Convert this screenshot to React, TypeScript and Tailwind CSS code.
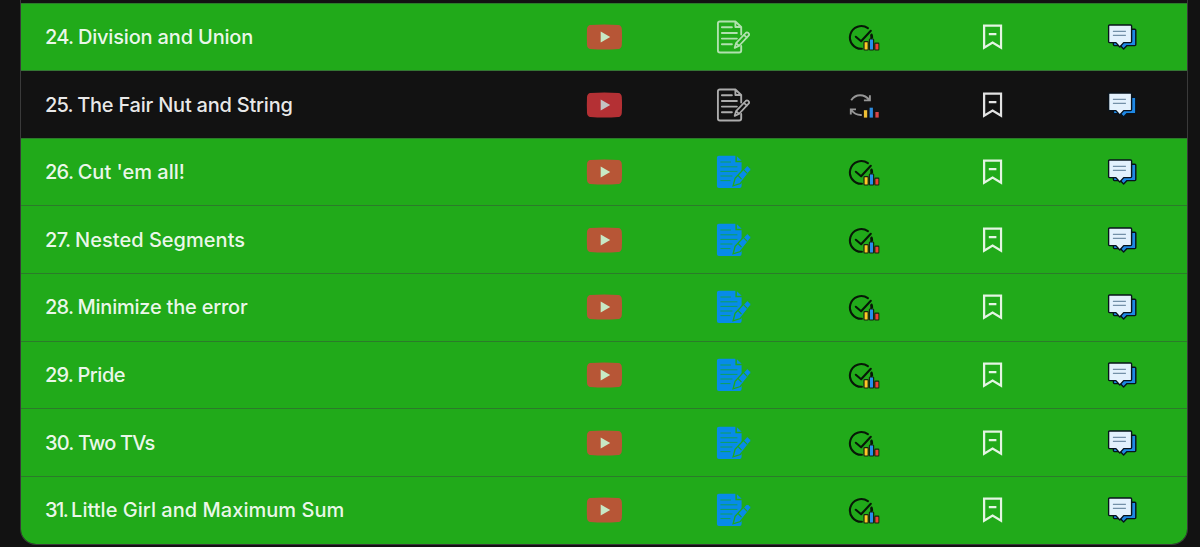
import clsx from "clsx";

interface Problem {
  id: number;
  title: string;
  solved: boolean;
  hasNotes: boolean;
  idTracking: string;
  titleTracking: string;
}

const problems: Problem[] = [
  { id: 24, title: "Division and Union", solved: true, hasNotes: false, idTracking: "tracking-[-0.7px]", titleTracking: "tracking-[-0.17px]" },
  { id: 25, title: "The Fair Nut and String", solved: false, hasNotes: false, idTracking: "tracking-[-0.8px]", titleTracking: "tracking-[-0.22px]" },
  { id: 26, title: "Cut 'em all!", solved: true, hasNotes: true, idTracking: "tracking-[-0.7px]", titleTracking: "tracking-[0px]" },
  { id: 27, title: "Nested Segments", solved: true, hasNotes: true, idTracking: "tracking-[-0.6px]", titleTracking: "tracking-[0.02px]" },
  { id: 28, title: "Minimize the error", solved: true, hasNotes: true, idTracking: "tracking-[-0.8px]", titleTracking: "tracking-[-0.22px]" },
  { id: 29, title: "Pride", solved: true, hasNotes: true, idTracking: "tracking-[-0.8px]", titleTracking: "tracking-[-0.45px]" },
  { id: 30, title: "Two TVs", solved: true, hasNotes: true, idTracking: "tracking-[-0.8px]", titleTracking: "tracking-[-0.85px]" },
  { id: 31, title: "Little Girl and Maximum Sum", solved: true, hasNotes: true, idTracking: "tracking-[-1.5px]", titleTracking: "tracking-[0.03px]" },
];

function VideoIcon() {
  return (
    <svg viewBox="0 0 36 26" className="h-[26px] w-9 translate-x-[0.4px] opacity-75">
      <path d="M4 1Q18 0 32 1Q35 1.3 35.4 5Q36 13 35.4 21Q35 24.7 32 25Q18 26 4 25Q1 24.7 .6 21Q0 13 .6 5Q1 1.3 4 1Z" fill="#ea3b40" />
      <path d="M14.3 7.5v11l9.5-5.5z" fill="#fff" />
    </svg>
  );
}

function NotesIcon({ filled }: { filled: boolean }) {
  if (filled) {
    return (
      <svg viewBox="0 0 34 34" className="h-[34px] w-[34px] -translate-x-[0.6px]" fill="#078be8">
        <path d="M2.5 .8H19v6.4h6.2V31q0 2-2 2H2.5q-2 0-2-2V2.8q0-2 2-2z" />
        <path d="M20.5 1.2l4.8 4.6h-4.8z" />
        <path d="M4 7h10.5M4 11.8h17M4 16.4h17M4 21h12M4 25.6h10" stroke="#10a05c" strokeWidth="1" />
        <path d="M31 10l4 4.4L24 28.5l-7.3 2.3 2-7.5z" stroke="#21aa1a" strokeWidth="1.3" />
        <path d="M26.9 14.4l3.9 3.9M21.6 20.4l3.5 3.7" stroke="#21aa1a" strokeWidth="1.2" />
      </svg>
    );
  }
  return (
    <svg viewBox="0 0 34 34" className="h-[34px] w-[34px] -translate-x-[0.6px] opacity-65" fill="none" stroke="#fff" strokeWidth="1.9" strokeLinecap="round" strokeLinejoin="round">
      <path d="M24.8 14.5V7L19 1.5H3.5q-2 0-2 2v27q0 2 2 2h19.3q2 0 2-2V26M19 1.5V7h5.8" />
      <path d="M5.5 7.3h10M5.5 13h15M5.5 18.6h15M5.5 24.2h10" />
      <path d="M29.3 13q1.2-1.2 2.7 0 1.4 1.5.2 2.7L22.5 26l-4.2 1.8 1.4-4.7zM27.5 14.9l3 2.8M19.7 23.1l2.8 2.9" strokeWidth="1.8" />
    </svg>
  );
}

function StatusIcon({ solved }: { solved: boolean }) {
  return (
    <svg viewBox="0 0 32 28" className="h-7 w-8 translate-x-[0.6px]" fill="none" strokeLinecap="round" strokeLinejoin="round">
      {solved ? (
        <>
          <path d="M20.3 5.1A11.4 11.4 0 1 0 14.3 25.8M24 11.5a11 11 0 0 1 .5 3" stroke="#071807" strokeWidth="2.1" />
          <path d="M8.2 13.8l5.3 4.5L23.2 7.8" stroke="#071807" strokeWidth="2.1" />
          <path d="M23.6 12.2v5" stroke="#071807" strokeWidth="1.8" />
          <g stroke="#17250f" strokeWidth="1.2">
            <rect x="16.4" y="18.7" width="4.2" height="8.3" rx=".8" fill="#ffc928" />
            <rect x="21.8" y="16" width="4.2" height="11" rx=".8" fill="#2690ee" />
            <rect x="27.2" y="20.2" width="4.2" height="6.8" rx=".8" fill="#ef3f38" />
          </g>
        </>
      ) : (
        <>
          <path d="M3.6 9.2Q7 4.2 12.5 4.2q5.5 0 9.6 5.1M16.3 9.4h6V4.2M14.2 24Q8 24.6 3.2 18.5M3.2 23.4v-5h5.2" stroke="#969696" strokeWidth="1.9" strokeLinecap="butt" strokeLinejoin="miter" />
          <rect x="16.3" y="19.2" width="3.3" height="7.4" fill="#eebf35" />
          <rect x="22" y="16.7" width="3.3" height="9.9" fill="#2e8cdf" />
          <rect x="27.8" y="21" width="3.3" height="5.6" fill="#d94646" />
        </>
      )}
    </svg>
  );
}

function BookmarkIcon() {
  return (
    <svg viewBox="0 0 20 26" className="h-[26px] w-5 -translate-x-[0.4px]" fill="none" stroke="#fff" strokeOpacity=".88" strokeWidth="2.3">
      <path d="M1.5 1.6h17v22.2L10 18.5l-8.5 5.3zM6.2 10.2h7.6" />
    </svg>
  );
}

function DiscussIcon() {
  return (
    <svg viewBox="0 0 30 26" className="h-[26px] w-[30px] translate-x-[0.4px]" stroke="#08131d" strokeWidth="1.4" strokeLinejoin="round">
      <path d="M6 5.2h21.4q1 0 1 1v14.4q0 1-1 1h-7.8L16.2 25l-3.4-3.4H7q-1 0-1-1z" fill="#1e88e5" />
      <path d="M2.2 1h21q1 0 1 1v15.6q0 1-1 1h-6.9L12.4 23l-3.9-4.4H2.2q-1 0-1-1V2q0-1 1-1z" fill="#e3f1fd" />
      <path d="M5.5 7.3h13M5.5 11.3h13" stroke="#7390a8" strokeWidth="1.2" />
    </svg>
  );
}

function ProblemRow({ problem }: { problem: Problem }) {
  return (
    <li
      className={clsx(
        "grid grid-cols-[1fr_repeat(5,129.5px)] items-center border-t",
        problem.solved ? "border-[#2b7b2a] bg-[#21aa1a]" : "border-[#347533] bg-[#121212]",
      )}
    >
      <div className="pl-6 text-xl leading-none font-[460] whitespace-nowrap text-white/92">
        <span className={problem.idTracking}>{problem.id}. </span>
        <span className={problem.titleTracking}>{problem.title}</span>
      </div>
      <button type="button" className="flex justify-center" aria-label="Video">
        <VideoIcon />
      </button>
      <button type="button" className="flex justify-center" aria-label="Notes">
        <NotesIcon filled={problem.hasNotes} />
      </button>
      <button type="button" className="flex justify-center" aria-label="Status">
        <StatusIcon solved={problem.solved} />
      </button>
      <button type="button" className="flex justify-center" aria-label="Bookmark">
        <BookmarkIcon />
      </button>
      <button type="button" className="flex justify-center" aria-label="Discuss">
        <DiscussIcon />
      </button>
    </li>
  );
}

export default function App() {
  return (
    <main className="h-[547px] overflow-hidden bg-[#121212] pr-3 pl-5 font-['Inter',sans-serif]">
      <ul className="grid h-[544.5px] grid-rows-[repeat(8,1fr)] overflow-hidden rounded-b-2xl border-x border-b border-[#3a3a3a] pt-[2.7px]">
        {problems.map((problem) => (
          <ProblemRow key={problem.id} problem={problem} />
        ))}
      </ul>
    </main>
  );
}
